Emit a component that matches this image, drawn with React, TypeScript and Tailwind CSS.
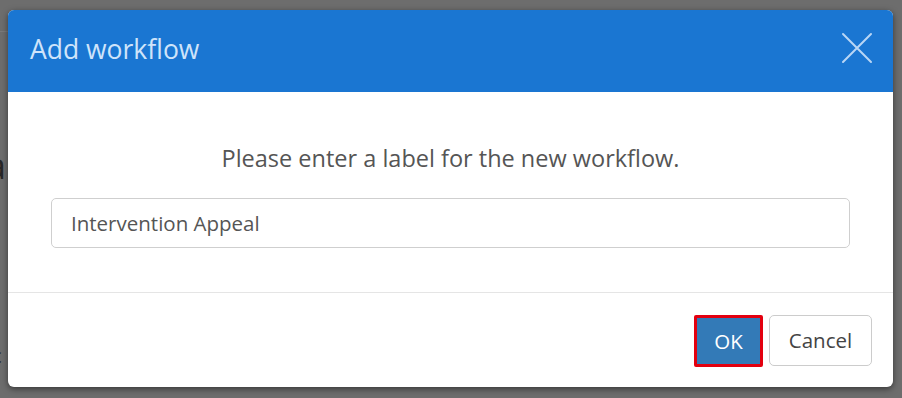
export default function App() {
  return (
    <div
      className="relative w-[902px] h-[398px] overflow-hidden bg-[#6d6d6d] pt-[10px] pl-[8px]"
      style={{ fontFamily: '"Open Sans", "Noto Sans", sans-serif' }}
    >
      {/* page behind the overlay */}
      <span className="absolute left-[-14px] top-[148px] text-[36px] leading-none text-[#262626]">a</span>
      <span className="absolute left-[-8px] top-[346px] text-[20px] leading-none text-[#262626]">c</span>
      <div className="absolute left-0 top-[31px] h-px w-[8px] bg-[#7a7a7a]" />

      {/* dialog */}
      <div className="relative flex flex-col w-[885px] h-[377px] rounded-[6px] bg-white overflow-hidden shadow-[0_2px_6px_rgba(0,0,0,0.5)]">
        <div className="flex items-center justify-between h-[82px] bg-[#1a76d2] pl-[22px] pr-[20px]">
          <h1 className="text-[26.5px] leading-none text-[#cfe4fa] -mt-[4px]">Add workflow</h1>
          <svg width="32" height="32" viewBox="0 0 32 32" className="-mt-[6px]">
            <path d="M2 2 L30 30 M30 2 L2 30" stroke="#b9d6f5" strokeWidth="2" strokeLinecap="round" />
          </svg>
        </div>

        <div className="flex flex-col pt-[50px] px-[43px] h-[200px]">
          <p className="text-center text-[23.5px] leading-[32px] text-[#555]">
            Please enter a label for the new workflow.
          </p>
          <div className="mt-[24px] flex items-center h-[50px] rounded-[5px] border border-[#cfcfcf] px-[19px] text-[20.5px] text-[#555]">
            Intervention Appeal
          </div>
        </div>

        <div className="h-px bg-[#e5e5e5]" />

        <div className="flex justify-end gap-[6px] pt-[22px] pr-[21px]">
          <div className="flex items-center justify-center w-[69px] h-[52px] border-[3px] border-[#e3000f] bg-[#337ab7] rounded-[2px] text-[20.5px] text-white">
            OK
          </div>
          <div className="flex items-center justify-center w-[103px] h-[51px] rounded-[5px] border border-[#cccccc] bg-white text-[20.5px] text-[#444]">
            Cancel
          </div>
        </div>
      </div>
    </div>
  )
}
